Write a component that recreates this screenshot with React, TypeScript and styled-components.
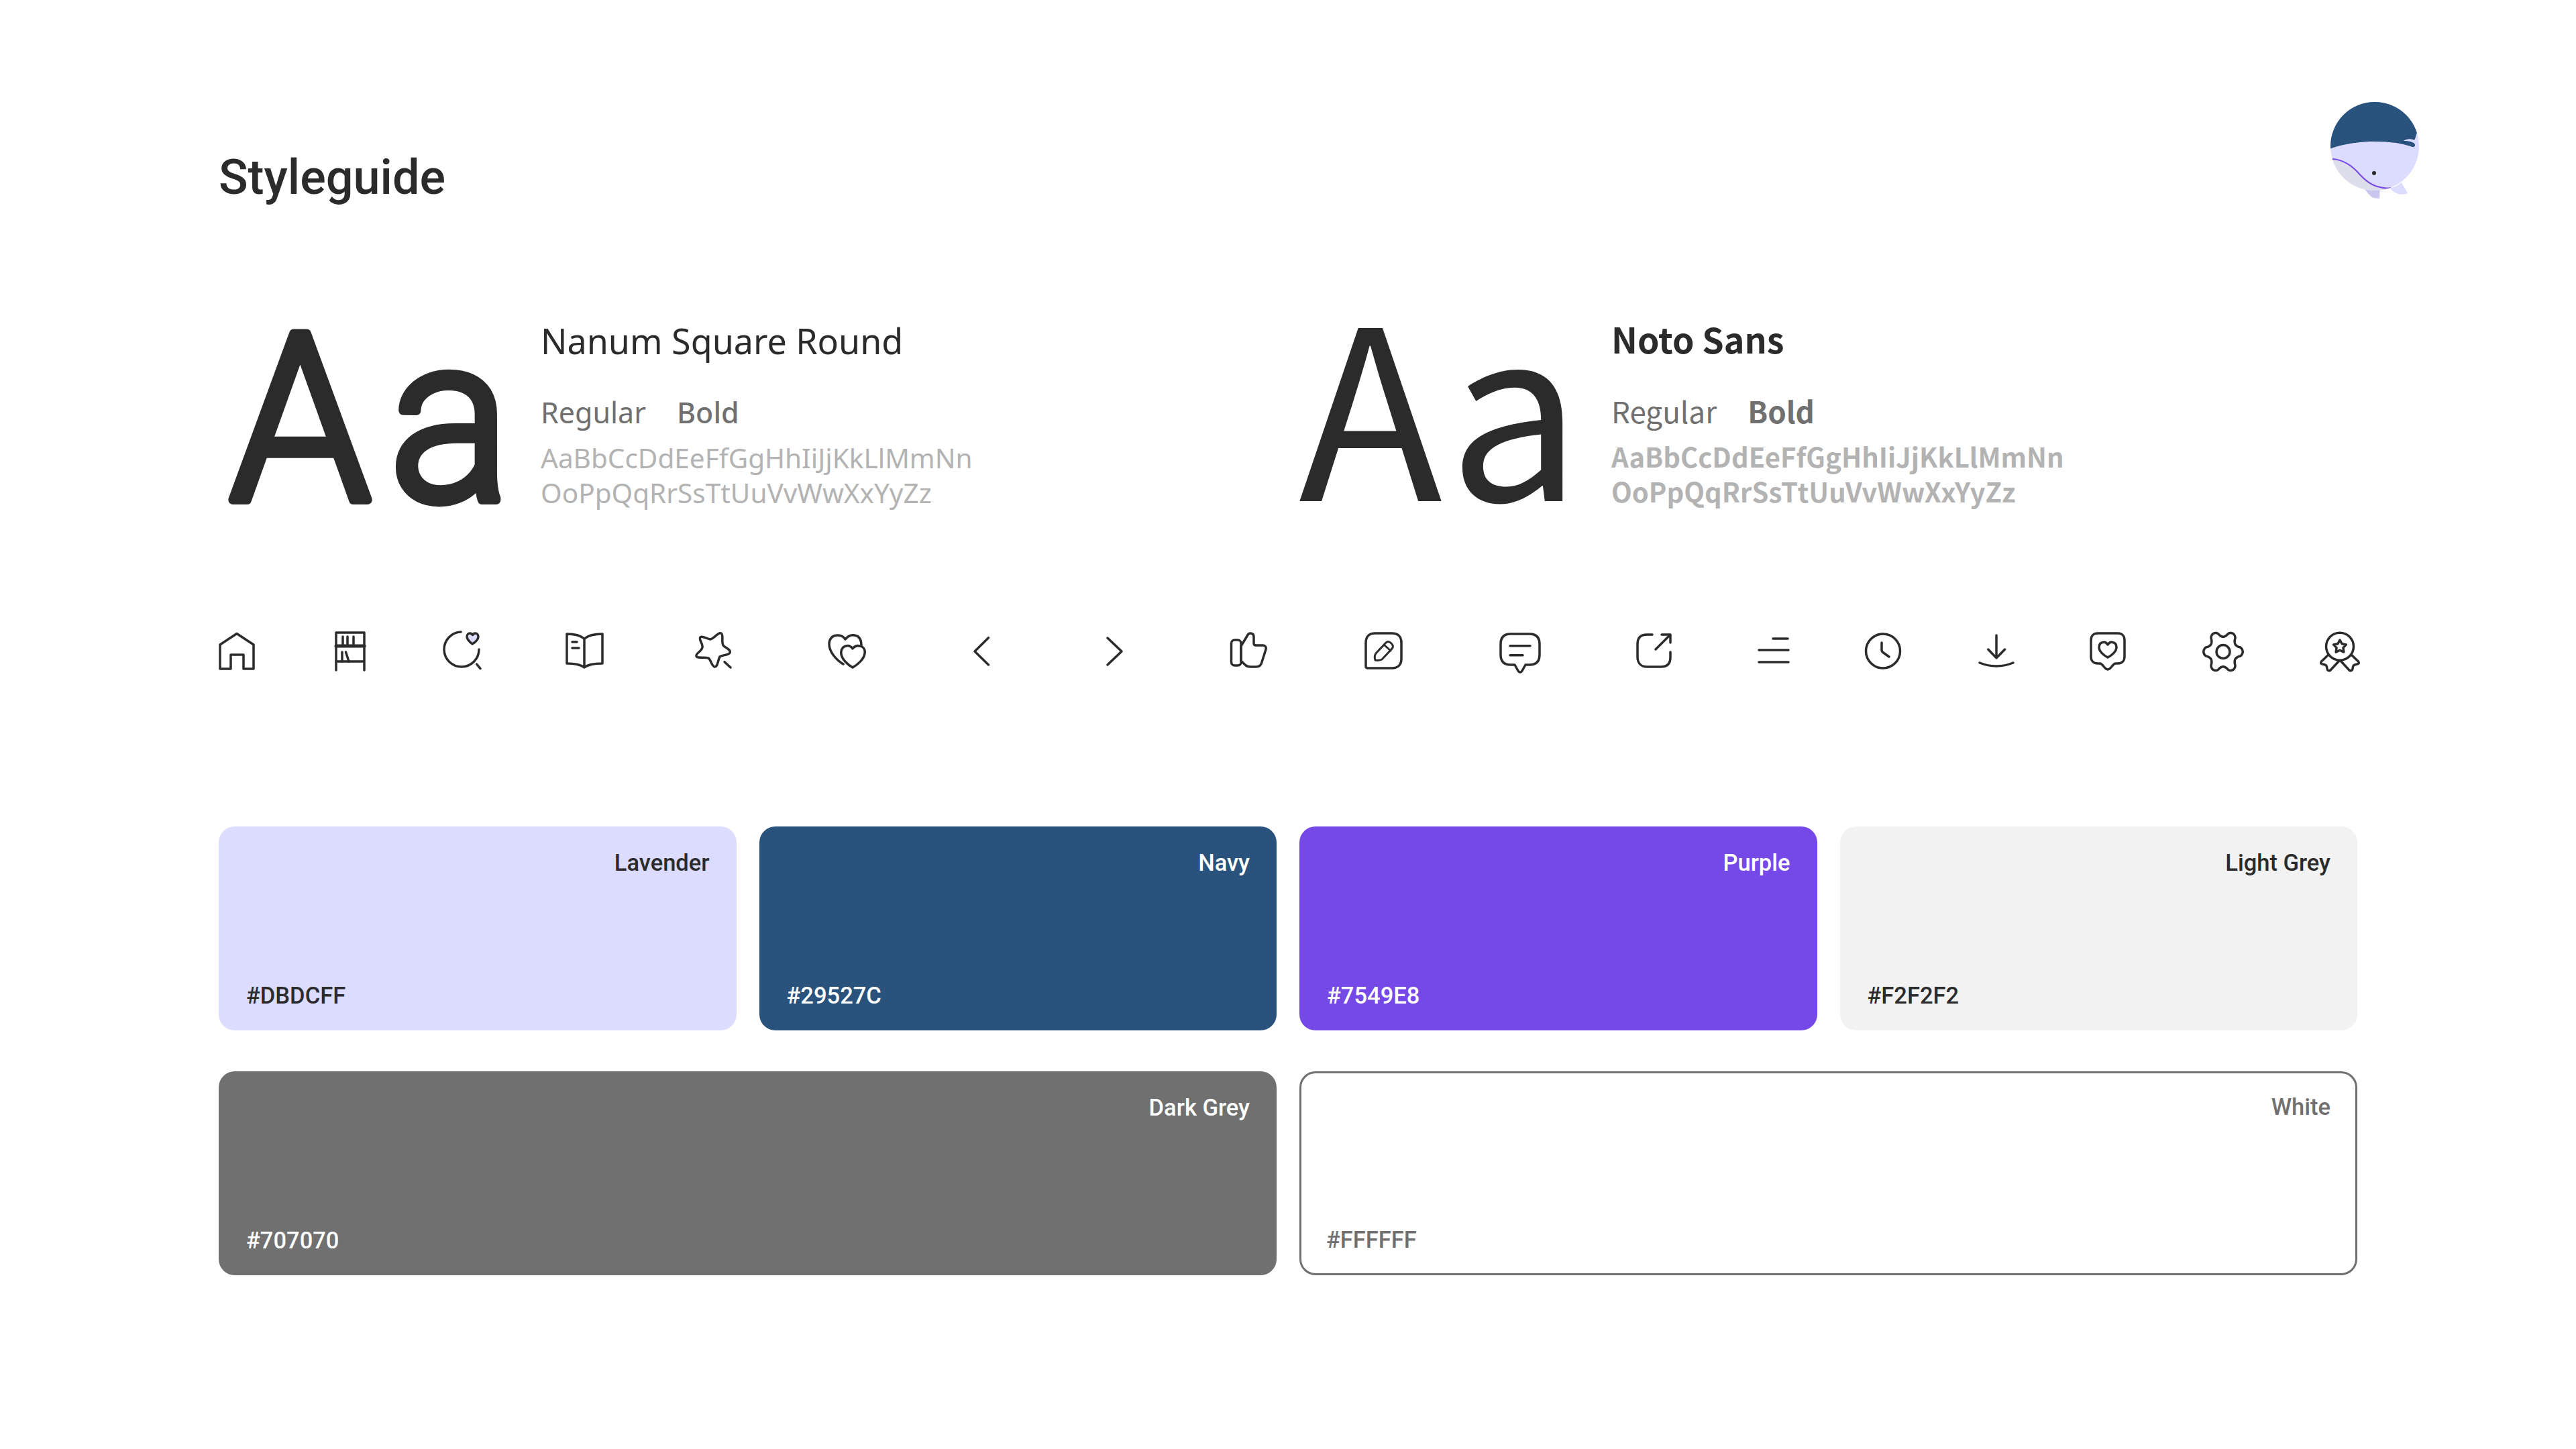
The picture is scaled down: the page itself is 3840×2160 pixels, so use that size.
import React from "react";
import styled, { createGlobalStyle } from "styled-components";

const INK = "#2b2b2b";

const GlobalStyle = createGlobalStyle`
    html, body {
        margin: 0;
        background: #ffffff;
    }
`;

const gearPath = (() => {
    const pts: string[] = [];
    for (let i = 0; i < 180; i++) {
        const t = (i / 180) * Math.PI * 2;
        const c = Math.cos(6 * t);
        const r = 25 + 4.2 * Math.sign(c) * Math.pow(Math.abs(c), 0.7);
        pts.push(`${(32 + r * Math.cos(t)).toFixed(2)} ${(33.5 + 1.07 * r * Math.sin(t)).toFixed(2)}`);
    }
    return `M${pts.join("L")}Z`;
})();

const icons: { name: string; pitch: number; body: React.ReactNode }[] = [
    {
        name: "home",
        pitch: 169,
        body: <path d="M7 59V23L32 6.5L57 23V59H42V38H23V59Z" />,
    },
    {
        name: "shelf",
        pitch: 167,
        body: (
            <>
                <path d="M11 61V5H53V61M11 48H53" />
                <path d="M11 25H53" strokeWidth="5" />
                <path d="M21 11V25M28 11V25M37 11V25M20 34V48M25.5 34L30 48" />
            </>
        ),
    },
    {
        name: "search-heart",
        pitch: 182,
        body: (
            <>
                <path d="M30 4A26 26 0 1 0 57 30M53.6 52L59 58.7" />
                <path
                    fill="#DBDCFF"
                    d="M47 22C42 18 39 15 39 11C39 7.500 41.500 6 43.500 6C45 6 46.500 7 47.500 8.500C48.500 7 50 6 51.500 6C54 6 56 8 56 11C56 15 52 19 47 22Z"
                />
            </>
        ),
    },
    {
        name: "book",
        pitch: 193,
        body: (
            <path d="M32 14C26 9 15 7 6 7V51C15 51 26 52 32 57C38 52 49 51 59 51V7C49 7 38 9 32 14V57M14 19H21M14 28H24" />
        ),
    },
    {
        name: "star",
        pitch: 199,
        body: (
            <path d="M27 15C33 14 38 4 43 6C47 8 43 18 46 24C49 28 58 30 56 35C54 39 45 38 41 41C38 46 38 57 33 56C29 55 28 46 24 43C19 41 7 44 6 40C5 36 14 33 15 27C16 21 9 15 12 12C15 9 22 15 27 15ZM48 48.700L57 57" />
        ),
    },
    {
        name: "hearts",
        pitch: 200,
        body: (
            <>
                <path d="M29 15C26 10 21 8.500 16 9C9 9.500 5 15 5 22C5 34 16 46 26 52M29 15C33 10 38 8 43 9C49 10 53 15 53 24" />
                <path
                    fill="#ffffff"
                    d="M40 29C37 25 33 24 30 25C25 26 22 31 23 37C24 45 33 53 40 57C47 53 57 45 58 36C59 30 56 26 51 25C47 24 43 25 40 29Z"
                />
            </>
        ),
    },
    { name: "chevron-left", pitch: 198, body: <path d="M42.500 12.700L22 33L42.500 53" /> },
    { name: "chevron-right", pitch: 200, body: <path d="M22 13L43 33L22 53" /> },
    {
        name: "thumb",
        pitch: 201,
        body: (
            <>
                <rect x="6.500" y="16" width="14.500" height="38" rx="5" />
                <path d="M21 25L31 8.500C33 5 40 5 40 11V21C40 23 41 24 43 24H54C57 24 59 27 58 30L52 49C51 54 47 56 43 56H35C31 56 29 55 27 53L21 47V25" />
            </>
        ),
    },
    {
        name: "edit",
        pitch: 204,
        body: (
            <>
                <path d="M6 56V20C6 11 11 6 20 6H45C54 6 59 11 59 20V44C59 53 54 58 45 58H8C7 58 6 57 6 56Z" />
                <path
                    strokeWidth="3"
                    d="M21 36L36 20C38 18 41 18 44 21C47 24 47 27 45 29L30 45C28 46 23 47 20 46C19 43 19 39 21 36ZM34 24L43 32"
                />
            </>
        ),
    },
    {
        name: "chat",
        pitch: 200,
        body: (
            <path d="M18 7H46C56 7 61 12 61 22V38C61 48 56 53 46 53H40L35 62C33 65 31 65 29 62L24 53H18C8 53 3 48 3 38V22C3 12 8 7 18 7ZM17 24.700H47M17 38.700H36" />
        ),
    },
    {
        name: "share",
        pitch: 178,
        body: <path d="M29 8H21C11 8 7 13 7 22V41C7 50 12 56 21 56H42C52 56 56 51 56 42V34M34 30L56 8M43 8H56V20" />,
    },
    { name: "menu", pitch: 163, body: <path d="M31 14H53M10 31H54M10 49H54" /> },
    {
        name: "clock",
        pitch: 169,
        body: (
            <>
                <circle cx="32" cy="32.500" r="25.500" />
                <path d="M30 20V31C30 33 31 34 32.500 35L41 41" />
            </>
        ),
    },
    {
        name: "download",
        pitch: 166,
        body: <path d="M32 9V42.700M19.700 30L32 42.700L44.600 30M7 50Q32 60 57 50" />,
    },
    {
        name: "heart-tag",
        pitch: 172,
        body: (
            <path d="M17 6H47C53 6 57 10 57 16V41C57 47 53 51 47 51H44C39 51 37 60 32 60C27 60 25 51 20 51H17C11 51 7 47 7 41V16C7 10 11 6 17 6ZM32 23C30 20 27 19 25 19.500C21 20 19 23 19 27C19 33 26 39 32 42C38 39 45 33 45 27C45 23 43 20 39 19.500C37 19 34 20 32 23Z" />
        ),
    },
    {
        name: "gear",
        pitch: 174,
        body: (
            <>
                <path d={gearPath} />
                <circle cx="32" cy="33.500" r="10" />
            </>
        ),
    },
    {
        name: "badge",
        pitch: 64,
        body: (
            <>
                <circle cx="32" cy="25.700" r="20.500" />
                <path d="M32 16L35.100 21.800L41.500 22.900L36.900 27.600L37.900 34.100L32 31.200L26.100 34.100L27.100 27.600L22.500 22.900L28.900 21.800Z" />
                <path d="M15 38L4.500 48C3 50 3.500 52 6 52L10 53C11.500 53.500 12 54 12.500 56L13 59C13.500 62 16 62.500 18 61L31 47" />
                <path d="M49 38L59.500 48C61 50 60.500 52 58 52L54 53C52.500 53.500 52 54 51.500 56L51 59C50.500 62 48 62.500 46 61L33 47" />
            </>
        ),
    },
];

const swatchesTop = [
    { name: "Lavender", hex: "#DBDCFF", bg: "#DBDCFF", fg: INK },
    { name: "Navy", hex: "#29527C", bg: "#29527C", fg: "#ffffff" },
    { name: "Purple", hex: "#7549E8", bg: "#7549E8", fg: "#ffffff" },
    { name: "Light Grey", hex: "#F2F2F2", bg: "#F2F2F2", fg: INK },
];

const swatchesBottom = [
    { name: "Dark Grey", hex: "#707070", bg: "#707070", fg: "#ffffff", outlined: false },
    { name: "White", hex: "#FFFFFF", bg: "#ffffff", fg: "#707070", outlined: true },
];

const WhaleLogo = () => (
    <LogoSvg viewBox="0 0 150 160" aria-label="whale logo">
        <defs>
            <clipPath id="whale-body">
                <circle cx="80" cy="78" r="66" />
            </clipPath>
        </defs>
        <path d="M102 140C108 140 114 137 120 132L129 148C122 151 111 151 102 140Z" fill="#DBDCFF" />
        <path d="M64 140L88 136L87 156L78 155C72 152 68 146 64 140Z" fill="#C9C6EE" />
        <circle cx="80" cy="78" r="66" fill="#DBDCFF" />
        <g clipPath="url(#whale-body)">
            <path d="M10 97C30 98 44 107 53 115C62 124 72 136 88 139C94 141 98 141 104 140L100 150H10Z" fill="#DEDDEC" />
            <path d="M17 97C32 98 44 106 53 115C62 125 72 136 88 139C94 141 98 141 104 140" fill="none" stroke="#7549E8" strokeWidth="2" />
            <path d="M8 84C30 74 60 71 80 71C100 71 120 73 136 79C141 80 141 75 138 73C132 70 128 70 123 70C128 66 136 67 139 69C142 64 141 58 146 55V0H8Z" fill="#29527C" />
        </g>
        <circle cx="79" cy="118" r="3" fill={INK} />
    </LogoSvg>
);

const App: React.FC = () => {
    return (
        <>
            <GlobalStyle />
            <Page>
                <Header>
                    <Title>Styleguide</Title>
                    <WhaleLogo />
                </Header>

                <Specimens>
                    <Specimen $sampleWidth={480}>
                        <RoundSample viewBox="0 0 480 287">
                            <text x="0" y="0" transform="translate(16 273) scale(0.97 1)">Aa</text>
                        </RoundSample>
                        <SpecimenInfo>
                            <FontName>Nanum Square Round</FontName>
                            <Weights $size={43}>
                                <span>Regular</span>
                                <WeightBold $heavy={false}>Bold</WeightBold>
                            </Weights>
                            <Alphabet $size={40.5}>
                                AaBbCcDdEeFfGgHhIiJjKkLlMmNn
                                <br />
                                OoPpQqRrSsTtUuVvWwXxYyZz
                            </Alphabet>
                        </SpecimenInfo>
                    </Specimen>

                    <Specimen $sampleWidth={466} $cjk>
                        <NotoSample>Aa</NotoSample>
                        <SpecimenInfo $nudge={-3}>
                            <FontName $bold>Noto Sans</FontName>
                            <Weights $size={44}>
                                <span>Regular</span>
                                <WeightBold $heavy>Bold</WeightBold>
                            </Weights>
                            <Alphabet $bold $size={40}>
                                AaBbCcDdEeFfGgHhIiJjKkLlMmNn
                                <br />
                                OoPpQqRrSsTtUuVvWwXxYyZz
                            </Alphabet>
                        </SpecimenInfo>
                    </Specimen>
                </Specimens>

                <IconRow>
                    {icons.map((icon) => (
                        <IconCell key={icon.name} $pitch={icon.pitch}>
                            <IconSvg viewBox="0 0 64 64">{icon.body}</IconSvg>
                        </IconCell>
                    ))}
                </IconRow>

                <Palette>
                    <SwatchRow $columns={4}>
                        {swatchesTop.map((s) => (
                            <Swatch key={s.name} $bg={s.bg} $fg={s.fg}>
                                <SwatchName>{s.name}</SwatchName>
                                <span>{s.hex}</span>
                            </Swatch>
                        ))}
                    </SwatchRow>
                    <SwatchRow $columns={2}>
                        {swatchesBottom.map((s) => (
                            <Swatch key={s.name} $bg={s.bg} $fg={s.fg} $outlined={s.outlined}>
                                <SwatchName>{s.name}</SwatchName>
                                <span>{s.hex}</span>
                            </Swatch>
                        ))}
                    </SwatchRow>
                </Palette>
            </Page>
        </>
    );
};

const Page = styled.div`
    box-sizing: border-box;
    width: 3840px;
    height: 2160px;
    padding: 140px 326px 0 326px;
    background: #ffffff;
    color: ${INK};
    font-family: "Noto Sans", sans-serif;
    overflow: hidden;
`;

const Header = styled.header`
    display: flex;
    justify-content: space-between;
    height: 160px;
`;

const Title = styled.h1`
    margin: 83px 0 0;
    font-family: "Roboto", sans-serif;
    font-size: 72px;
    font-weight: 500;
    line-height: 84px;
`;

const LogoSvg = styled.svg`
    width: 150px;
    height: 160px;
    margin-right: -96px;
`;

const Specimens = styled.section`
    display: grid;
    grid-template-columns: 1610px 1fr;
    margin-top: 172px;
`;

const Specimen = styled.div<{ $sampleWidth: number; $cjk?: boolean }>`
    display: grid;
    grid-template-columns: ${(p) => p.$sampleWidth}px 1fr;
    font-family: ${(p) => (p.$cjk ? '"Noto Sans CJK KR", sans-serif' : '"Noto Sans", sans-serif')};
`;

const RoundSample = styled.svg`
    display: block;
    width: 480px;
    height: 287px;
    overflow: visible;

    text {
        font-family: "Roboto", sans-serif;
        font-size: 348px;
        font-weight: 300;
        letter-spacing: 28px;
        fill: ${INK};
        stroke: ${INK};
        stroke-width: 14px;
        stroke-linejoin: round;
    }
`;

const NotoSample = styled.div`
    height: 287px;
    font-size: 352px;
    line-height: 243px;
    font-weight: 400;
`;

const SpecimenInfo = styled.div<{ $nudge?: number }>`
    display: flex;
    flex-direction: column;
    margin-top: ${(p) => p.$nudge ?? 0}px;
`;

const FontName = styled.div<{ $bold?: boolean }>`
    font-size: 52px;
    line-height: 72px;
    font-weight: ${(p) => (p.$bold ? 700 : 400)};
`;

const Weights = styled.div<{ $size: number }>`
    display: flex;
    gap: 46px;
    margin-top: 41px;
    color: #707070;
    font-size: ${(p) => p.$size}px;
    line-height: 60px;
`;

const WeightBold = styled.span<{ $heavy: boolean }>`
    font-weight: ${(p) => (p.$heavy ? 700 : 500)};
`;

const Alphabet = styled.div<{ $bold?: boolean; $size: number }>`
    margin-top: 12px;
    color: #b3b3b3;
    font-size: ${(p) => p.$size}px;
    line-height: 52px;
    font-weight: ${(p) => (p.$bold ? 700 : 400)};
`;

const IconRow = styled.section`
    display: flex;
    margin: 177px 0 0 -5px;
`;

const IconCell = styled.div<{ $pitch: number }>`
    flex: 0 0 ${(p) => p.$pitch}px;
    height: 64px;
`;

const IconSvg = styled.svg`
    display: block;
    width: 64px;
    height: 64px;
    overflow: visible;
    fill: none;
    stroke: ${INK};
    stroke-width: 3.5;
    stroke-linecap: round;
    stroke-linejoin: round;
`;

const Palette = styled.section`
    display: flex;
    flex-direction: column;
    gap: 61px;
    margin-top: 230px;
`;

const SwatchRow = styled.div<{ $columns: number }>`
    display: grid;
    grid-template-columns: repeat(${(p) => p.$columns}, 1fr);
    gap: 34px;
`;

const Swatch = styled.div<{ $bg: string; $fg: string; $outlined?: boolean }>`
    box-sizing: border-box;
    display: flex;
    flex-direction: column;
    justify-content: space-between;
    height: 304px;
    padding: ${(p) => (p.$outlined ? "28px 37px 28px 37px" : "32px 40px 30px 41px")};
    border-radius: 24px;
    border: ${(p) => (p.$outlined ? "3px solid #707070" : "none")};
    background: ${(p) => p.$bg};
    color: ${(p) => p.$fg};
    font-family: "Roboto", sans-serif;
    font-size: 34.5px;
    font-weight: 500;
    line-height: 44px;
`;

const SwatchName = styled.span`
    align-self: flex-end;
`;

export default App;
